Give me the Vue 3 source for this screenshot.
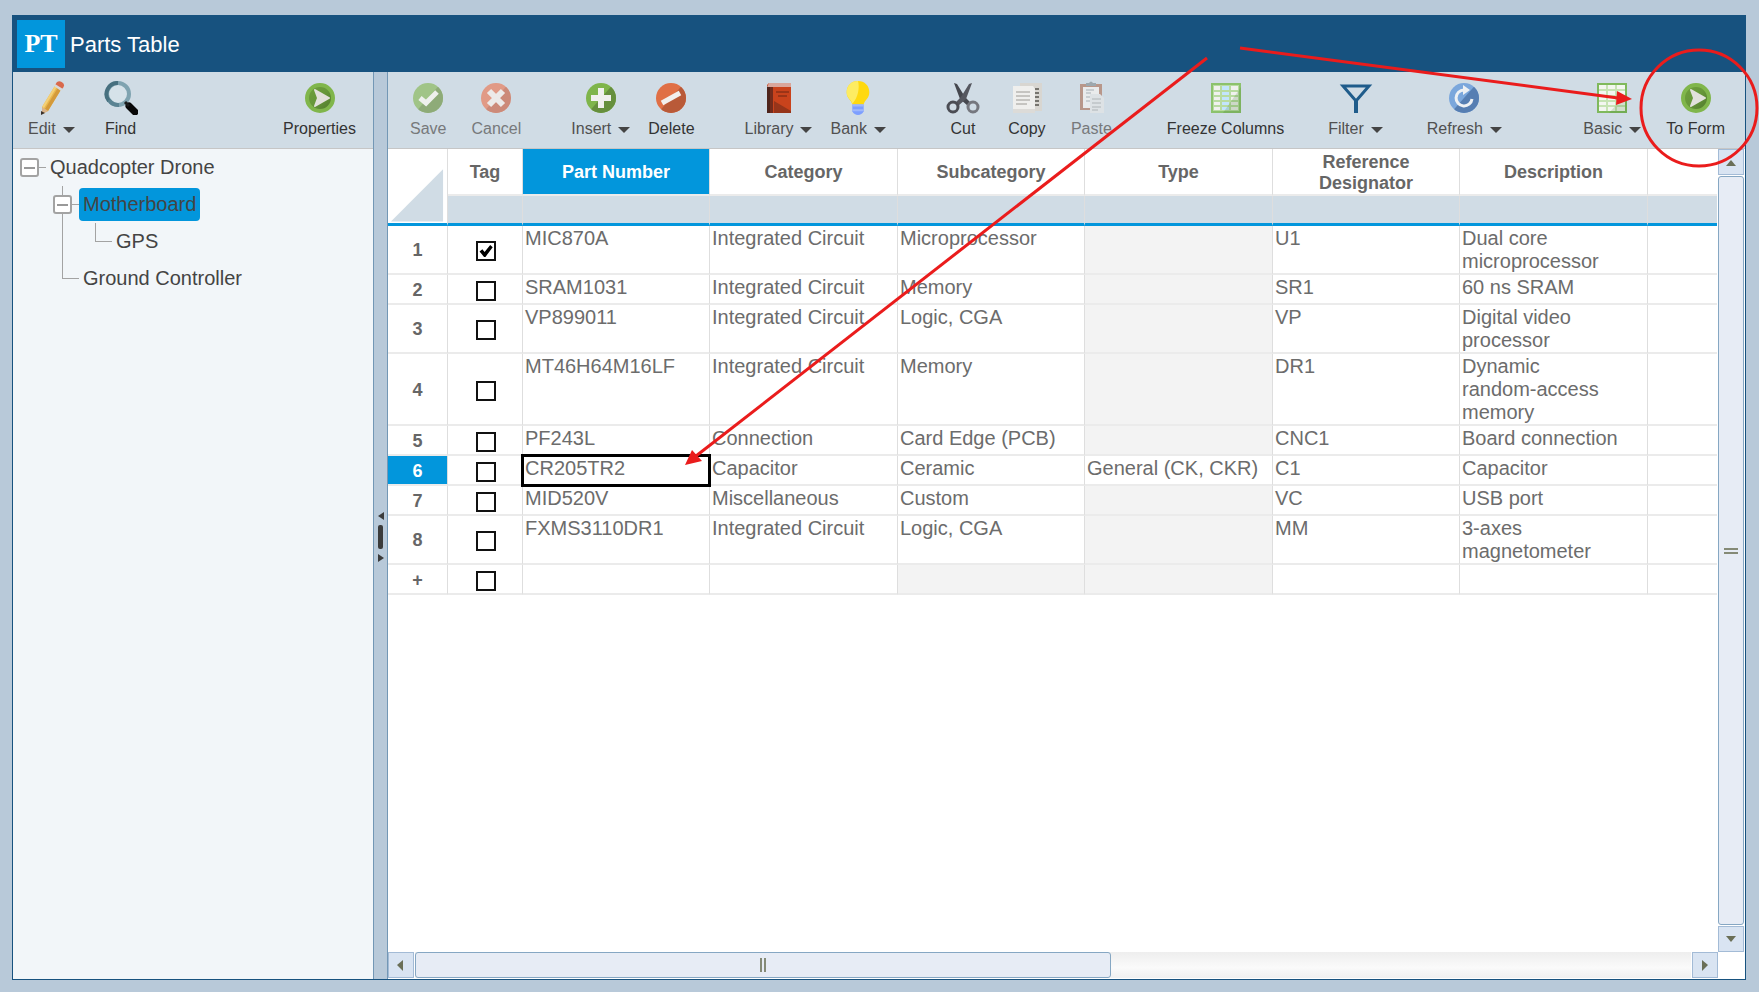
<script setup>
import { ref } from 'vue'

const leftTools = [
  { id: 'edit', label: 'Edit', menu: true },
  { id: 'find', label: 'Find' },
]

const toolGroups = [
  { id: 'commit', items: [{ id: 'save', label: 'Save', disabled: true }, { id: 'cancel', label: 'Cancel', disabled: true }] },
  { id: 'rows', items: [{ id: 'insert', label: 'Insert', menu: true }, { id: 'delete', label: 'Delete' }] },
  { id: 'sources', items: [{ id: 'library', label: 'Library', menu: true }, { id: 'bank', label: 'Bank', menu: true }] },
  { id: 'clipboard', items: [{ id: 'cut', label: 'Cut' }, { id: 'copy', label: 'Copy' }, { id: 'paste', label: 'Paste', disabled: true }] },
  { id: 'view', items: [{ id: 'freeze', label: 'Freeze Columns' }, { id: 'filter', label: 'Filter', menu: true }, { id: 'refresh', label: 'Refresh', menu: true }] },
  { id: 'mode', items: [{ id: 'basic', label: 'Basic', menu: true }, { id: 'form', label: 'To Form' }] },
]

const columns = ['Part Number', 'Category', 'Subcategory', 'Type', 'Reference Designator', 'Description']

const rows = ref([
  { no: '1', tag: true, cells: ['MIC870A', 'Integrated Circuit', 'Microprocessor', '', 'U1', 'Dual core\nmicroprocessor'] },
  { no: '2', tag: false, cells: ['SRAM1031', 'Integrated Circuit', 'Memory', '', 'SR1', '60 ns SRAM'] },
  { no: '3', tag: false, cells: ['VP899011', 'Integrated Circuit', 'Logic, CGA', '', 'VP', 'Digital video\nprocessor'] },
  { no: '4', tag: false, cells: ['MT46H64M16LF', 'Integrated Circuit', 'Memory', '', 'DR1', 'Dynamic\nrandom-access\nmemory'] },
  { no: '5', tag: false, cells: ['PF243L', 'Connection', 'Card Edge (PCB)', '', 'CNC1', 'Board connection'] },
  { no: '6', tag: false, cells: ['CR205TR2', 'Capacitor', 'Ceramic', 'General (CK, CKR)', 'C1', 'Capacitor'] },
  { no: '7', tag: false, cells: ['MID520V', 'Miscellaneous', 'Custom', '', 'VC', 'USB port'] },
  { no: '8', tag: false, cells: ['FXMS3110DR1', 'Integrated Circuit', 'Logic, CGA', '', 'MM', '3-axes\nmagnetometer'] },
  { no: '+', tag: false, cells: ['', '', '', '', '', ''] },
])

const activeRow = '6'

function isLocked(row, index) {
  return (index === 3 && !row.cells[3]) || (index === 2 && row.no === '+')
}
</script>

<template>
  <div class="page">
    <svg class="defs" aria-hidden="true">
      <defs>
        <clipPath id="disc"><circle cx="17" cy="17" r="15" /></clipPath>
        <linearGradient id="greenDisc" x1="0" y1="0" x2="1" y2="1">
          <stop offset="0" stop-color="#6fa03c" /><stop offset="0.5" stop-color="#67973a" /><stop offset="1" stop-color="#4d742b" />
        </linearGradient>
        <symbol id="i-edit" viewBox="0 0 34 34">
          <path d="M22 3 28 7 14 30 8 33 8 26Z" fill="#e9b84e" />
          <path d="M25 5 28 7 14 30 11 28Z" fill="#d49a3a" />
          <path d="M22 3 24 4 10 27 8 26Z" fill="#f3d078" />
          <path d="M8 26 14 30 8 33Z" fill="#d9b48c" />
          <path d="M7 30 11 32 7 34Z" fill="#3b3028" />
          <path d="M21 4 23 1Q26-1 29 2 31 4 29 7L28 8Z" fill="#d9694c" />
          <path d="M20 5 21 3 29 8 27 10Z" fill="#d7d9dc" />
        </symbol>
        <symbol id="i-find" viewBox="0 0 34 34">
          <circle cx="14" cy="13" r="11" fill="#d6e2e9" stroke="#7fa3b0" stroke-width="4" />
          <path d="M5 20A11 11 0 0 1 14 2" fill="none" stroke="#47707f" stroke-width="4" />
          <path d="M5 19A11 11 0 0 0 15 24" fill="none" stroke="#5a8392" stroke-width="4" />
          <path d="M25 25 31 31" stroke="#080808" stroke-width="7" stroke-linecap="round" />
          <path d="M21 21 25 25" stroke="#1b1b1b" stroke-width="3" />
        </symbol>
        <symbol id="i-form" viewBox="0 0 34 34">
          <circle cx="17" cy="17" r="13" fill="url(#greenDisc)" stroke="#80b64b" stroke-width="4" />
          <path d="M12 9 26 17 12 25 15 17Z" fill="#e2e1dc" stroke="#e2e1dc" stroke-width="2" stroke-linejoin="round" />
        </symbol>
        <symbol id="i-save" viewBox="0 0 34 34">
          <circle cx="17" cy="17" r="15" fill="#a0c487" />
          <path d="M32 0V34H2Z" fill="#8eab78" clip-path="url(#disc)" />
          <path d="M9 17 15 22 26 11" fill="none" stroke="#eef0ed" stroke-width="5" />
        </symbol>
        <symbol id="i-cancel" viewBox="0 0 34 34">
          <circle cx="17" cy="17" r="15" fill="#e19a86" />
          <path d="M32 0V34H2Z" fill="#cc8a79" clip-path="url(#disc)" />
          <path d="M10 10 24 24M24 10 10 24" stroke="#eceae9" stroke-width="6" />
        </symbol>
        <symbol id="i-insert" viewBox="0 0 34 34">
          <circle cx="17" cy="17" r="15" fill="#7fb54b" />
          <path d="M32 0V34H2Z" fill="#668f3d" clip-path="url(#disc)" />
          <path d="M17 7V27M7 17H27" stroke="#f0f0ee" stroke-width="6" />
        </symbol>
        <symbol id="i-delete" viewBox="0 0 34 34">
          <circle cx="17" cy="17" r="15" fill="#e06f45" />
          <path d="M32 0V34H2Z" fill="#b95a38" clip-path="url(#disc)" />
          <path d="M8 22 26 12" stroke="#f1efee" stroke-width="5" />
        </symbol>
        <symbol id="i-library" viewBox="0 0 34 34">
          <path d="M7 2H29V32H5V4Z" fill="#c9431c" />
          <path d="M29 32V30L12 20V32Z" fill="#96351a" />
          <path d="M5 5H11V32H5Z" fill="#4e241b" />
          <path d="M8 5H11V32H8Z" fill="#732c1c" />
          <path d="M7 2H29V6H5Z" fill="#d9a79c" />
          <path d="M14 11H27M16 15H25" stroke="#6e2613" stroke-width="1" />
        </symbol>
        <symbol id="i-bank" viewBox="0 0 34 36">
          <path d="M17 0C10 0 5 5 5 12 5 19 10 20 11 25H23C24 20 29 19 29 12 29 5 24 0 17 0Z" fill="#ffd90f" />
          <path d="M17 0C10 0 5 5 5 12 5 18 10 20 11 24 17 18 19 7 17 0Z" fill="#fdec62" />
          <path d="M11 25H23V32Q21 36 17 36 13 36 11 32Z" fill="#7d9fff" />
          <path d="M11 25H23V27H11ZM11 30H23V32H11Z" fill="#9fb8fb" />
        </symbol>
        <symbol id="i-cut" viewBox="0 0 34 34">
          <path d="M8 2 11 3 19 16 25 22 22 25 14 18Z" fill="#45474e" />
          <path d="M26 2 23 3 15 16 9 22 12 25 20 18Z" fill="#55575f" />
          <circle cx="7" cy="26" r="5" fill="none" stroke="#4b4d54" stroke-width="3" />
          <circle cx="27" cy="26" r="5" fill="none" stroke="#75777e" stroke-width="3" />
        </symbol>
        <symbol id="i-copy" viewBox="0 0 34 34">
          <path d="M10 2H32V30H10Z" fill="#d8d6d1" />
          <path d="M25 8H29M25 12H29M25 16H29M25 20H29M25 24H29" stroke="#77756f" stroke-width="2" />
          <path d="M3 5H23L25 8V32H3Z" fill="#efefed" />
          <path d="M3 28H25V32H3Z" fill="#dcdbd8" />
          <path d="M6 11H20M6 15H20M6 19H20M6 23H17" stroke="#9c9a95" stroke-width="1" />
        </symbol>
        <symbol id="i-paste" viewBox="0 0 34 34">
          <path d="M6 3H28V29H6Z" fill="#b8978a" />
          <path d="M9 6H25V27H9Z" fill="#e9ebec" />
          <path d="M12 5V2H15Q17-1 19 2H22V5Z" fill="#9da8ae" />
          <path d="M12 12H17M12 16H16M12 20H16M12 9H20" stroke="#a7b0b5" stroke-width="1" />
          <path d="M16 13H26L30 17V32H16Z" fill="#dde2e5" />
          <path d="M18 18H27M18 22H27M18 26H27M18 29H24" stroke="#aeb4b7" stroke-width="1" />
        </symbol>
        <symbol id="i-freeze" viewBox="0 0 34 34">
          <path d="M2 2H32V32H2Z" fill="#8cc26c" />
          <path d="M4 4H30V30H4Z" fill="#b8dba1" />
          <path d="M5 5H11V9H5ZM5 11H11V14H5ZM5 16H11V19H5ZM5 21H11V24H5ZM5 26H11V29H5ZM22 5H29V9H22ZM22 11H29V14H22ZM22 16H29V19H22ZM22 21H29V24H22ZM22 26H29V29H22Z" fill="#f0f1ee" />
          <path d="M13 5H20V9H13ZM13 11H20V14H13ZM13 16H20V19H13ZM13 21H20V24H13ZM13 26H20V29H13Z" fill="#c3e5fc" />
          <path d="M32 6V32H14Z" fill="#3f7a31" opacity="0.2" />
        </symbol>
        <symbol id="i-basic" viewBox="0 0 34 34">
          <path d="M2 2H32V32H2Z" fill="#7fb95c" />
          <path d="M4 4H30V30H4Z" fill="#c6e3b4" />
          <path d="M4 4H11V8H4ZM4 10H11V14H4ZM4 16H11V19H4ZM4 21H11V24H4ZM4 26H11V30H4ZM13 4H20V8H13ZM13 10H20V14H13ZM13 16H20V19H13ZM13 21H20V24H13ZM13 26H20V30H13ZM22 4H30V8H22ZM22 10H30V14H22ZM22 16H30V19H22ZM22 21H30V24H22ZM22 26H30V30H22Z" fill="#f3f6f0" />
          <path d="M32 12V32H14Z" fill="#3f7a31" opacity="0.18" />
        </symbol>
        <symbol id="i-filter" viewBox="0 0 34 34">
          <path d="M4 5H30L17 20Z" fill="none" stroke="#1f5c8b" stroke-width="3" />
          <path d="M17 19V32" stroke="#1f5c8b" stroke-width="4" />
        </symbol>
        <symbol id="i-refresh" viewBox="0 0 34 34">
          <circle cx="17" cy="17" r="15" fill="#7ba7dc" />
          <path d="M32 0V34H2Z" fill="#567eb2" clip-path="url(#disc)" />
          <path d="M17 9A8 8 0 1 0 25 18" fill="none" stroke="#eef1f4" stroke-width="3" />
          <path d="M16 4 23 9 16 14Z" fill="#eef1f4" />
        </symbol>
      </defs>
    </svg>

    <div class="window">
      <header class="titlebar">
        <span class="logo">PT</span>
        <h1>Parts Table</h1>
      </header>

      <div class="body">
        <aside class="side">
          <div class="toolbar side-tools">
            <button v-for="tool in leftTools" :key="tool.id" type="button" class="tool" :class="{ menu: tool.menu }">
              <svg class="icon"><use :href="'#i-' + tool.id" /></svg>
              <span class="label">{{ tool.label }}<i v-if="tool.menu" class="caret"></i></span>
            </button>
            <button type="button" class="tool end">
              <svg class="icon"><use href="#i-form" /></svg>
              <span class="label">Properties</span>
            </button>
          </div>

          <ul class="tree">
            <li>
              <div class="node">
                <button type="button" class="toggle" aria-label="Collapse Quadcopter Drone"></button>
                <span class="link"></span><span class="name">Quadcopter Drone</span>
              </div>
              <ul>
                <li>
                  <div class="node">
                    <button type="button" class="toggle" aria-label="Collapse Motherboard"></button>
                    <span class="link"></span><span class="name selected">Motherboard</span>
                  </div>
                  <ul>
                    <li><div class="node leaf"><span class="link"></span><span class="name">GPS</span></div></li>
                  </ul>
                </li>
                <li><div class="node leaf"><span class="link"></span><span class="name">Ground Controller</span></div></li>
              </ul>
            </li>
          </ul>
        </aside>

        <div class="splitter">
          <span class="tri left"></span>
          <span class="grab"></span>
          <span class="tri right"></span>
        </div>

        <main class="main">
          <div class="toolbar">
            <div v-for="group in toolGroups" :key="group.id" class="group" :class="group.id">
              <button
                v-for="tool in group.items"
                :key="tool.id"
                type="button"
                class="tool"
                :class="{ menu: tool.menu }"
                :disabled="tool.disabled"
              >
                <svg class="icon"><use :href="'#i-' + tool.id" /></svg>
                <span class="label">{{ tool.label }}<i v-if="tool.menu" class="caret"></i></span>
              </button>
            </div>
          </div>

          <div class="sheet">
            <div class="viewport">
              <table>
                <colgroup>
                  <col class="c-no" /><col class="c-tag" />
                  <col class="c-odd" /><col class="c-even" /><col class="c-odd" /><col class="c-even" /><col class="c-odd" /><col class="c-even" />
                  <col />
                </colgroup>
                <thead>
                  <tr class="titles">
                    <td rowspan="2" class="corner"><svg viewBox="0 0 60 74"><path d="M3 73 56 20V73Z" /></svg></td>
                    <th scope="col">Tag</th>
                    <th v-for="(column, i) in columns" :key="column" scope="col" :class="{ current: i === 0 }">{{ column }}</th>
                    <td></td>
                  </tr>
                  <tr class="filters">
                    <td v-for="n in 8" :key="n"></td>
                  </tr>
                </thead>
                <tbody>
                  <tr v-for="row in rows" :key="row.no">
                    <th scope="row" :class="{ current: row.no === activeRow }">{{ row.no }}</th>
                    <td class="tag"><input v-model="row.tag" type="checkbox" :aria-label="'Tag row ' + row.no" /></td>
                    <td
                      v-for="(cell, i) in row.cells"
                      :key="i"
                      :class="{ locked: isLocked(row, i), active: row.no === activeRow && i === 0 }"
                    >{{ cell }}</td>
                    <td></td>
                  </tr>
                </tbody>
              </table>
            </div>

            <div class="scroll vertical">
              <button type="button" class="step" aria-label="Scroll up"><svg viewBox="0 0 24 24"><path d="M7 16 12 10 17 16Z" /></svg></button>
              <div class="thumb"><span class="grip"></span></div>
              <button type="button" class="step" aria-label="Scroll down"><svg viewBox="0 0 24 24"><path d="M7 9 12 15 17 9Z" /></svg></button>
            </div>
            <div class="scroll horizontal">
              <button type="button" class="step" aria-label="Scroll left"><svg viewBox="0 0 24 24"><path d="M14 7 8 12 14 18Z" /></svg></button>
              <div class="track"><div class="thumb"><span class="grip"></span></div></div>
              <button type="button" class="step" aria-label="Scroll right"><svg viewBox="0 0 24 24"><path d="M9 7 15 12 9 18Z" /></svg></button>
            </div>
          </div>
        </main>
      </div>
    </div>

    <svg class="callout" viewBox="0 0 1759 992" aria-hidden="true">
      <g fill="none" stroke="#ea1c1c" stroke-width="3">
        <path d="M1207 58 696 456" />
        <path d="M1240 48 1618 98" />
        <circle cx="1699" cy="108" r="58" />
      </g>
      <path d="M685 465 692 450 702 461ZM1632 99 1617 91 1616 105Z" fill="#ea1c1c" />
    </svg>
  </div>
</template>

<style>
body {
  margin: 0;
  background: #b8c9d9;
}
</style>

<style scoped>
.page {
  position: relative;
  box-sizing: border-box;
  height: 100vh;
  padding: 15px 13px 12px 12px;
  overflow: hidden;
  background: #b8c9d9;
  font-family: "Liberation Sans", Arial, sans-serif;
  color: #444;
}
.defs {
  position: absolute;
  width: 0;
  height: 0;
}
.callout {
  position: absolute;
  top: 0;
  left: 0;
  width: 100%;
  height: 100%;
  pointer-events: none;
}
.window {
  display: flex;
  flex-direction: column;
  box-sizing: border-box;
  height: 100%;
  border: 1px solid #17527f;
  border-top: 0;
  background: #fff;
}
.titlebar {
  display: flex;
  align-items: center;
  gap: 5px;
  height: 57px;
  padding: 0 4px;
  box-sizing: border-box;
  flex: none;
  background: #17527f;
  color: #fff;
}
.logo {
  width: 48px;
  height: 48px;
  background: #0296dc;
  font: bold 26px/48px "Liberation Serif", serif;
  text-align: center;
}
h1 {
  margin: 0;
  padding-top: 2px;
  font-size: 22px;
  font-weight: 400;
  line-height: 28px;
}
.body {
  display: flex;
  flex: 1;
  min-height: 0;
}
.side {
  display: flex;
  flex-direction: column;
  width: 360px;
  flex: none;
  background: #f2f6f9;
  border-right: 1px solid #7397b5;
}
.toolbar {
  display: flex;
  box-sizing: border-box;
  height: 77px;
  padding: 9px 20px 0 22px;
  flex: none;
  background: #d0dce5;
  border-bottom: 1px solid #c6c6c6;
}
.side-tools {
  gap: 29px;
  padding: 9px 17px 0 15px;
}
.tool {
  display: flex;
  flex-direction: column;
  align-items: center;
  gap: 5px;
  height: 60px;
  padding: 0;
  border: 0;
  background: none;
  font-family: inherit;
  font-size: 16px;
  line-height: 18px;
  color: #333;
  white-space: nowrap;
}
.tool.menu {
  color: #505050;
}
.tool:disabled {
  color: #77797b;
}
.tool.end {
  margin-left: auto;
}
.icon {
  width: 34px;
  height: 34px;
}
.label {
  display: flex;
  align-items: center;
}
.caret {
  margin: 2px 0 0 7px;
  border: 6px solid transparent;
  border-top-color: #444;
  border-bottom: 0;
}
.group {
  display: flex;
  gap: 25px;
  margin-right: 50px;
}
.group.rows,
.group.sources {
  gap: 18px;
}
.group.sources {
  margin-right: 57px;
}
.group.clipboard {
  gap: 24px;
  margin-right: 55px;
}
.group.clipboard .tool {
  min-width: 40px;
}
.group.view {
  gap: 44px;
}
.group.mode {
  margin: 0 0 0 auto;
}
.tree {
  font-size: 20px;
  line-height: 23px;
}
.tree,
.tree ul {
  margin: 0;
  padding: 0;
  list-style: none;
}
.tree {
  padding-left: 7px;
}
.tree ul {
  position: relative;
  margin-left: 33px;
}
.tree ul::before {
  content: "";
  position: absolute;
  top: 0;
  bottom: 18px;
  left: 9px;
  width: 1px;
  background: #a3a3a3;
}
.node {
  display: flex;
  align-items: center;
  height: 37px;
}
.toggle {
  position: relative;
  box-sizing: border-box;
  display: flex;
  align-items: center;
  justify-content: center;
  width: 19px;
  height: 19px;
  padding: 0;
  border: 2px solid #a3a3a3;
  border-radius: 3px;
  background: #fff;
}
.toggle::after {
  content: "";
  width: 11px;
  height: 2px;
  background: #999;
}
.link {
  width: 7px;
  height: 1px;
  background: #a3a3a3;
}
.leaf {
  padding-left: 9px;
}
.leaf .link {
  width: 17px;
}
.name {
  padding: 5px 4px;
}
.name.selected {
  border-radius: 4px;
  background: #0296dc;
}
.splitter {
  display: flex;
  flex-direction: column;
  align-items: center;
  justify-content: center;
  gap: 5px;
  width: 13px;
  padding-top: 22px;
  flex: none;
  background: #b8c9d9;
  border-right: 1px solid #7397b5;
}
.grab {
  width: 5px;
  height: 24px;
  border-radius: 2px;
  background: #3b3b3b;
}
.tri {
  border: 4px solid transparent;
}
.tri.left {
  border-right: 6px solid #3b3b3b;
  border-left: 0;
}
.tri.right {
  border-left: 6px solid #3b3b3b;
  border-right: 0;
}
.main {
  display: flex;
  flex-direction: column;
  flex: 1;
  min-width: 0;
}
.sheet {
  display: grid;
  grid-template: minmax(0, 1fr) 27px / minmax(0, 1fr) 28px;
  flex: 1;
  min-height: 0;
  background: #fff;
}
.viewport {
  overflow: hidden;
}
table {
  width: 100%;
  table-layout: fixed;
  border-collapse: separate;
  border-spacing: 0;
  font-size: 20px;
  line-height: 23px;
  color: #6c6c6c;
}
.c-no { width: 60px; }
.c-tag { width: 75px; }
.c-odd { width: 187px; }
.c-even { width: 188px; }
th,
td {
  box-sizing: border-box;
  border-right: 1px solid #dedede;
  border-bottom: 2px solid #ebebeb;
}
tr > :last-child {
  border-right: 0;
}
th {
  padding: 2px 20px 0;
  font-size: 18px;
  line-height: 21px;
  color: #666;
}
tbody th,
thead th:nth-child(2) {
  padding: 2px 0 0;
}
.titles > * {
  height: 47px;
}
th.current {
  background: #0296dc;
  color: #fff;
}
.filters td {
  height: 30px;
  background: #d0dce5;
}
.filters td,
td.corner {
  border-bottom: 3px solid #0296dc;
}
.corner {
  padding: 0;
}
.corner svg {
  display: block;
  width: 59px;
  height: 74px;
}
.corner path {
  fill: #d0dce5;
}
tbody td {
  height: 30px;
  padding: 1px 0 0 2px;
  vertical-align: top;
  white-space: pre-line;
}
td.locked {
  background: #f3f3f3;
}
td.active {
  position: relative;
}
td.active::after {
  content: "";
  position: absolute;
  inset: -2px -2px -3px;
  border: 3px solid #000;
}
td.tag {
  padding: 3px 0 0 2px;
  text-align: center;
  vertical-align: middle;
  line-height: 0;
}
input {
  appearance: none;
  position: relative;
  width: 20px;
  height: 20px;
  margin: 0;
  border: 2px solid #111;
  background: #fff;
}
input:checked::after {
  content: "";
  position: absolute;
  inset: 1px;
  background: #000;
  clip-path: polygon(4% 54%, 24% 38%, 40% 58%, 80% 8%, 98% 24%, 46% 92%, 36% 92%);
}
.scroll {
  display: flex;
  gap: 1px;
}
.vertical {
  flex-direction: column;
  padding: 0 1px;
}
.horizontal {
  grid-column: 1 / 3;
  padding: 0 27px 1px 0;
}
.step {
  box-sizing: border-box;
  width: 26px;
  height: 26px;
  padding: 0;
  flex: none;
  border: 1px solid #a3bbd6;
  background: #d9e4f2;
}
.step svg {
  display: block;
  width: 24px;
  height: 24px;
}
.step path {
  fill: #6a6f57;
}
.thumb {
  display: flex;
  align-items: center;
  justify-content: center;
  box-sizing: border-box;
  border: 1px solid #86a7c3;
  border-radius: 3px;
  background: #e7ecf5;
}
.vertical .thumb {
  flex: 1;
}
.track {
  display: grid;
  grid-template-columns: 6fr 5fr;
  flex: 1;
  background: linear-gradient(#eee, #fafafa 60%, #f0f0f0);
}
.grip {
  box-sizing: border-box;
  border: solid #858a76;
}
.vertical .grip {
  width: 14px;
  height: 6px;
  border-width: 2px 0;
}
.horizontal .grip {
  width: 6px;
  height: 14px;
  border-width: 0 2px;
}
</style>
